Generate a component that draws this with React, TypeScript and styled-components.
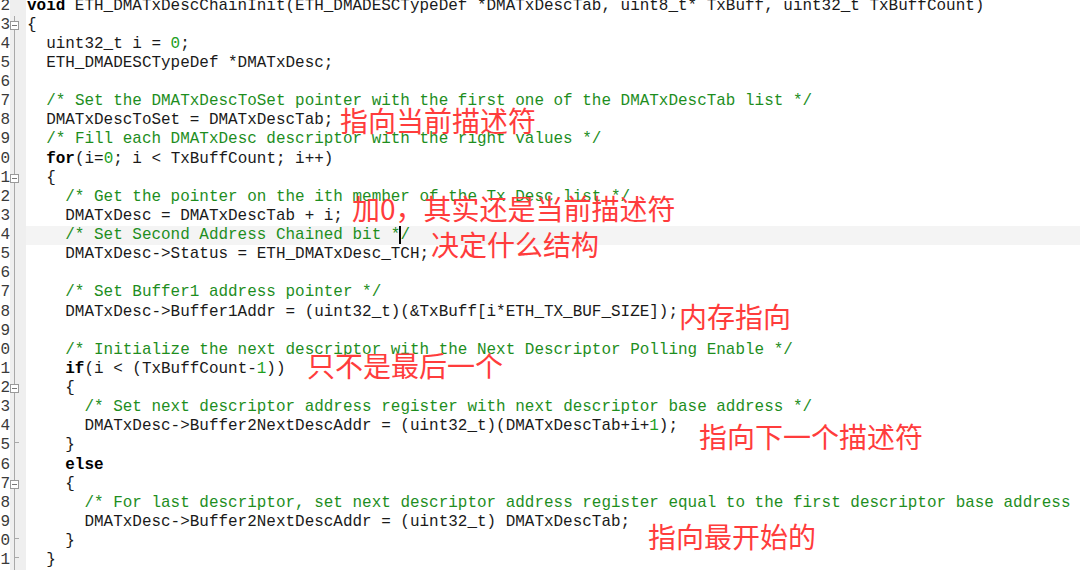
import React from "react";
import styled, { createGlobalStyle } from "styled-components";

const GlobalStyle = createGlobalStyle`
  html, body { margin: 0; padding: 0; background: #ffffff; overflow: hidden; }
  #root { width: 1080px; height: 572px; overflow: hidden; }
`;

const LH = 19.13;

const Page = styled.div`
  position: relative;
  width: 1080px;
  height: 572px;
  overflow: hidden;
  background: #ffffff;
`;

const Editor = styled.div`
  display: flex;
  flex-direction: column;
  margin-top: -3.5px;
`;

const Row = styled.div`
  display: grid;
  grid-template-columns: 10px 16px 1fr;
  height: ${LH}px;
`;

const LineNo = styled.div`
  display: flex;
  justify-content: flex-end;
  overflow: hidden;
  font-family: "Liberation Mono", monospace;
  font-size: 16px;
  line-height: ${LH}px;
  color: #3a3a3a;
  white-space: pre;
`;

const FoldCell = styled.div<{ $line: boolean }>`
  position: relative;
  background: #efefef;
  &::before {
    content: "";
    display: ${(p) => (p.$line ? "block" : "none")};
    position: absolute;
    left: 4px;
    top: 0;
    bottom: 0;
    width: 1px;
    background: #a9a9a9;
  }
`;

const FoldBox = styled.div`
  position: absolute;
  left: 0;
  top: 5px;
  width: 9px;
  height: 9px;
  box-sizing: border-box;
  border: 1px solid #9a9a9a;
  background: #ffffff;
  z-index: 1;
  &::after {
    content: "";
    position: absolute;
    left: 1px;
    right: 1px;
    top: 3px;
    height: 1px;
    background: #777777;
  }
`;

const FoldTick = styled.div`
  position: absolute;
  left: 4px;
  top: 6px;
  width: 5px;
  height: 1px;
  background: #a9a9a9;
`;

const Code = styled.div<{ $active: boolean }>`
  padding-left: 1px;
  background: ${(p) => (p.$active ? "#f4f4f4" : "#ffffff")};
  font-family: "Liberation Mono", monospace;
  font-size: 15.96px;
  line-height: ${LH}px;
  color: #1a1a1a;
  white-space: pre;
  overflow: hidden;
`;

const Keyword = styled.span`
  font-weight: bold;
  color: #000000;
`;

const Num = styled.span`
  color: #1ea01e;
`;

const Comment = styled.span`
  color: #1e8e1e;
`;

const Caret = styled.span`
  display: inline-block;
  width: 2px;
  height: 18px;
  margin: 0 -1px;
  vertical-align: top;
  background: #000000;
`;

const Note = styled.div<{ $x: number; $y: number }>`
  position: absolute;
  left: ${(p) => p.$x}px;
  top: ${(p) => p.$y}px;
  font-family: "Noto Sans CJK SC", "Noto Sans", sans-serif;
  font-size: 28px;
  line-height: 28px;
  color: #ff3c3c;
  white-space: nowrap;
  z-index: 2;
`;

const lines: string[] = [
  "void ETH_DMATxDescChainInit(ETH_DMADESCTypeDef *DMATxDescTab, uint8_t* TxBuff, uint32_t TxBuffCount)",
  "{",
  "  uint32_t i = 0;",
  "  ETH_DMADESCTypeDef *DMATxDesc;",
  "",
  "  /* Set the DMATxDescToSet pointer with the first one of the DMATxDescTab list */",
  "  DMATxDescToSet = DMATxDescTab;",
  "  /* Fill each DMATxDesc descriptor with the right values */",
  "  for(i=0; i < TxBuffCount; i++)",
  "  {",
  "    /* Get the pointer on the ith member of the Tx Desc list */",
  "    DMATxDesc = DMATxDescTab + i;",
  "    /* Set Second Address Chained bit */",
  "    DMATxDesc->Status = ETH_DMATxDesc_TCH;",
  "",
  "    /* Set Buffer1 address pointer */",
  "    DMATxDesc->Buffer1Addr = (uint32_t)(&TxBuff[i*ETH_TX_BUF_SIZE]);",
  "",
  "    /* Initialize the next descriptor with the Next Descriptor Polling Enable */",
  "    if(i < (TxBuffCount-1))",
  "    {",
  "      /* Set next descriptor address register with next descriptor base address */",
  "      DMATxDesc->Buffer2NextDescAddr = (uint32_t)(DMATxDescTab+i+1);",
  "    }",
  "    else",
  "    {",
  "      /* For last descriptor, set next descriptor address register equal to the first descriptor base address */",
  "      DMATxDesc->Buffer2NextDescAddr = (uint32_t) DMATxDescTab;",
  "    }",
  "  }",
];

const FIRST = 2;
const BOXES = new Set([3, 11, 22, 27]);
const TICKS = new Set([25, 30, 31]);
const ACTIVE = 14;

const notes = [
  { x: 340, y: 106, text: "指向当前描述符" },
  { x: 352, y: 194, text: "加0，其实还是当前描述符" },
  { x: 431, y: 230, text: "决定什么结构" },
  { x: 679, y: 302, text: "内存指向" },
  { x: 307, y: 351, text: "只不是最后一个" },
  { x: 699, y: 422, text: "指向下一个描述符" },
  { x: 648, y: 522, text: "指向最开始的" },
];

function renderCode(src: string, withCaret: boolean): React.ReactNode[] {
  const out: React.ReactNode[] = [];
  const ci = src.indexOf("/*");
  const code = ci >= 0 ? src.slice(0, ci) : src;
  const comment = ci >= 0 ? src.slice(ci) : "";
  const re = /\b(void|for|if|else)\b|\b\d+\b/g;
  let last = 0;
  let m: RegExpExecArray | null;
  let k = 0;
  while ((m = re.exec(code)) !== null) {
    if (m.index > last) out.push(code.slice(last, m.index));
    if (m[1]) out.push(<Keyword key={k++}>{m[0]}</Keyword>);
    else out.push(<Num key={k++}>{m[0]}</Num>);
    last = m.index + m[0].length;
  }
  if (last < code.length) out.push(code.slice(last));
  if (comment) {
    if (withCaret) {
      const cut = comment.length - 1;
      out.push(
        <Comment key={k++}>
          {comment.slice(0, cut)}
          <Caret />
          {comment.slice(cut)}
        </Comment>
      );
    } else {
      out.push(<Comment key={k++}>{comment}</Comment>);
    }
  }
  return out;
}

export default function App() {
  return (
    <Page>
      <GlobalStyle />
      <Editor>
        {lines.map((src, i) => {
          const n = FIRST + i;
          return (
            <Row key={n}>
              <LineNo>{String(n)}</LineNo>
              <FoldCell $line={n >= 3}>
                {BOXES.has(n) && <FoldBox />}
                {TICKS.has(n) && <FoldTick />}
              </FoldCell>
              <Code $active={n === ACTIVE}>{renderCode(src, n === ACTIVE)}</Code>
            </Row>
          );
        })}
      </Editor>
      {notes.map((nt) => (
        <Note key={nt.text} $x={nt.x} $y={nt.y}>
          {nt.text}
        </Note>
      ))}
    </Page>
  );
}
